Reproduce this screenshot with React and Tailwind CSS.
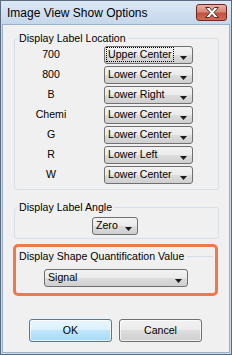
const rows = [
  ["700", "Upper Center", true],
  ["800", "Lower Center"],
  ["B", "Lower Right"],
  ["Chemi", "Lower Center"],
  ["G", "Lower Center"],
  ["R", "Lower Left"],
  ["W", "Lower Center"],
];

function Arrow() {
  return (
    <svg width="7" height="4" viewBox="0 0 7 4" className="mt-[5px] shrink-0">
      <path d="M0 0h7L3.5 4z" fill="#1a1a1a" />
    </svg>
  );
}

function Combo({ value, focused, className }) {
  return (
    <div
      className={`flex h-[18px] items-center rounded-[3px] border border-[#707070] bg-[linear-gradient(#f2f2f2,#ebebeb_50%,#dddddd_50%,#cfcfcf)] pl-[1px] pr-[5px] ${className}`}
    >
      <div className="flex-1">
        <span
          className={`inline-block border px-[1px] leading-[13px] ${focused ? "border-dotted border-black" : "border-transparent"}`}
        >
          {value}
        </span>
      </div>
      <Arrow />
    </div>
  );
}

function Group({ title, className, children }) {
  return (
    <fieldset className={`rounded-[3px] border border-[#d5dfe5] ${className}`}>
      <legend className="ml-[2px] px-[2px] leading-[12px]">{title}</legend>
      {children}
    </fieldset>
  );
}

export default function App() {
  return (
    <div className="flex h-[355px] w-[232px] flex-col border border-[#5b6b80] bg-[#c8d9ec] font-['Liberation_Sans',Arial,sans-serif] text-black">
      <div className="flex h-[23px] items-start justify-between bg-[linear-gradient(#dce8f5,#c5d7eb)] pl-[6px] pr-[4px]">
        <span className="mt-[5px] text-[12px] leading-[15px]">Image View Show Options</span>
        <div className="mt-[3px] flex h-[17px] w-[31px] items-center justify-center rounded-[3px] border border-[#6e2a22] bg-[linear-gradient(#eab0a3,#d98879_45%,#c4503d_55%,#cf6d55)]">
          <svg width="14" height="11" viewBox="0 0 14 11">
            <polygon
              points="0.5,0.5 4.5,0.5 7,3.5 9.5,0.5 13.5,0.5 9,5.5 13.5,10.5 9.5,10.5 7,7.5 4.5,10.5 0.5,10.5 5,5.5"
              fill="#fff"
              stroke="#4a2e2a"
              strokeWidth="1"
            />
          </svg>
        </div>
      </div>

      <div className="mx-px mb-px flex flex-1 flex-col border border-[#9cb0c8] bg-[#f0f0f0] text-[10.6px]">
        <Group title="Display Label Location" className="ml-[11px] mt-[7px] w-[205px] pb-[5px] pt-[2px]">
          <div className="flex flex-col gap-[2px]">
            {rows.map(([label, value, focused]) => (
              <div key={label} className="flex items-center">
                <span className="w-[72px] text-center">{label}</span>
                <Combo value={value} focused={focused} className="ml-[17px] w-[89px]" />
              </div>
            ))}
          </div>
        </Group>

        <Group title="Display Label Angle" className="ml-[11px] mt-[11px] w-[205px] pb-[3px] pt-[4px]">
          <Combo value="Zero" className="ml-[77px] w-[46px]" />
        </Group>

        <div className="ml-[10px] mt-[5px] w-[205px] rounded-[5px] border-[3px] border-[#f37848] pb-[6px] pl-[3px] pr-[2px] pt-[3px]">
          <div className="flex items-center">
            <span className="pr-[3px] leading-[12px]">Display Shape Quantification Value</span>
            <div className="h-px flex-1 bg-[#d5dfe5]" />
          </div>
          <Combo value="Signal" className="ml-[25px] mt-[7px] w-[144px]" />
        </div>

        <div className="ml-[26px] mt-[23px] flex gap-[7px]">
          <button className="h-[23px] w-[83px] rounded-[3px] border border-[#3c7fb1] bg-[linear-gradient(#eaf6fd,#d9f0fc_50%,#bee6fd_50%,#a7d9f5)] shadow-[inset_0_0_0_1px_#ffffffaa]">
            OK
          </button>
          <button className="h-[23px] w-[83px] rounded-[3px] border border-[#707070] bg-[linear-gradient(#f2f2f2,#ebebeb_50%,#dddddd_50%,#cfcfcf)] shadow-[inset_0_0_0_1px_#ffffffaa]">
            Cancel
          </button>
        </div>
      </div>
    </div>
  );
}
